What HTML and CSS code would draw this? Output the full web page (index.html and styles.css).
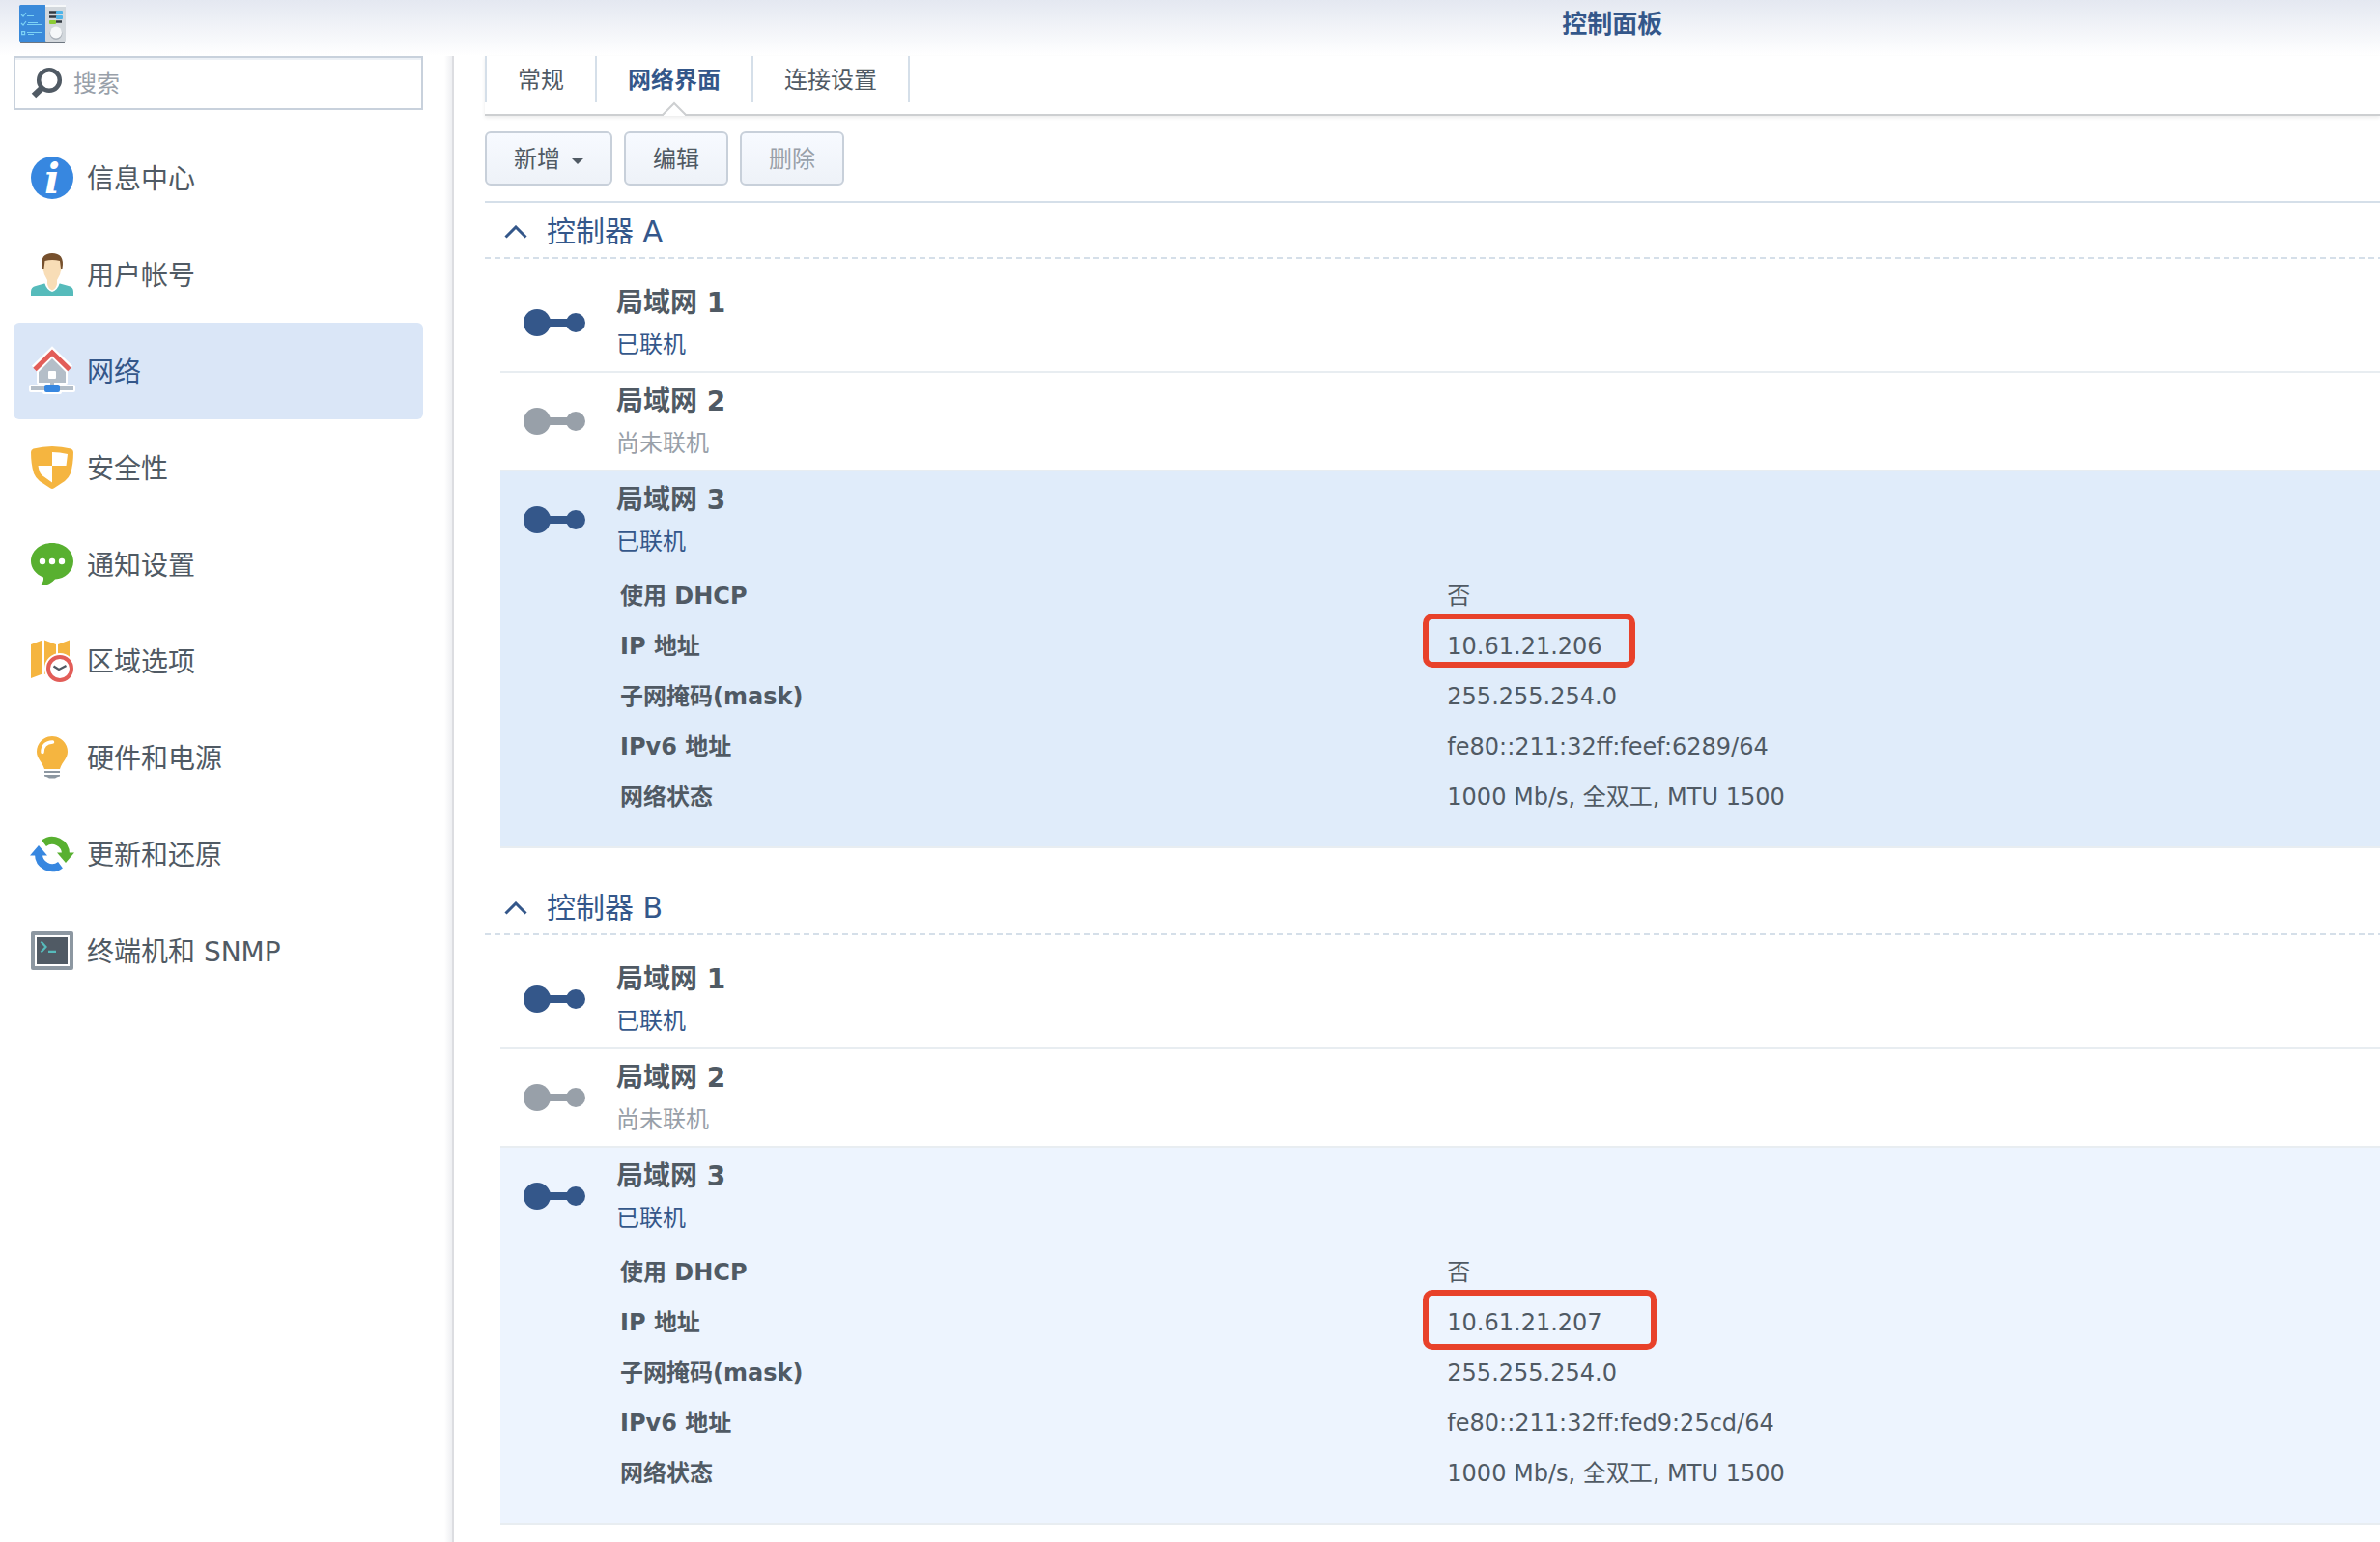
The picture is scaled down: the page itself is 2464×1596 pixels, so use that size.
FILE: index.html
```html
<!DOCTYPE html>
<html lang="zh-CN">
<head>
  <meta charset="UTF-8" />
  <meta name="viewport" content="width=device-width, initial-scale=1.0"/>
  <title>控制面板</title>
  <link rel="stylesheet" href="styles.css">
</head>
<body>
  <svg class="sprite" aria-hidden="true">
    <symbol id="link" viewBox="0 0 64 28">
      <circle cx="14" cy="14" r="14"/>
      <rect x="24" y="10" width="24" height="8"/>
      <circle cx="54" cy="14" r="10"/>
    </symbol>
    <symbol id="chevron" viewBox="0 0 24 14">
      <path d="M1.5 12.5 12 2l10.500 10.500" fill="none" stroke="currentColor" stroke-width="3"/>
    </symbol>
  </svg>

  <header class="titlebar">
    <svg class="logo" viewBox="0 0 48 40">
      <rect x="1" y="37" width="46" height="2.500" rx="1" fill="#6d7680"/>
      <rect width="28" height="38" rx="1.500" fill="#3a8ada"/>
      <rect x="27" width="21" height="38" rx="1" fill="#d3d8dd"/>
      <rect x="27" width="21" height="2" fill="#f6f8fa"/>
      <g fill="none" stroke="#7cd2f5" stroke-width="1.200">
        <path d="M2 10l2 2 3-4M2 19l2 2 3-4M2.600 27.600h3v3h-3zM9 9.500h14M8 11.500h7M9 18.500h10M8 20.500h15M8 28.500h15M9 30.500h6"/>
      </g>
      <path d="M31 7.500h8M31 12.500h8M38 17.500h6" stroke="#333a42" stroke-width="2.500"/>
      <rect x="38" y="6" width="7" height="4" rx="1" fill="#4fb4e8"/>
      <rect x="38" y="11" width="7" height="4" rx="1" fill="#4fb4e8"/>
      <rect x="31" y="16" width="7" height="4" rx="1" fill="#8bcb35"/>
      <circle cx="38" cy="29.500" r="6.500" fill="#aab1b9"/>
      <circle cx="38" cy="28.500" r="6" fill="#f5f7f9"/>
    </svg>
    <h1>控制面板</h1>
  </header>

  <div class="window">
    <aside class="sidebar">
      <label class="search">
        <svg viewBox="0 0 32 32">
          <circle cx="19" cy="13" r="10.800" fill="none" stroke="#505a64" stroke-width="4.500"/>
          <path d="M11 21.500 3 29" stroke="#505a64" stroke-width="6.500"/>
        </svg>
        <input type="text" placeholder="搜索" aria-label="搜索">
      </label>

      <nav class="menu">
        <a href="#info">
          <svg viewBox="0 0 44 44">
            <circle cx="22" cy="22" r="22" fill="#3787e0"/>
            <text x="22" y="38" class="info-mark">i</text>
          </svg>
          <span>信息中心</span>
        </a>
        <a href="#user">
          <svg viewBox="0 0 44 44">
            <path d="M0 44v-4q0-5 5-6l9-2.500h16l9 2.500q5 1 5 6v4z" fill="#56bbbb"/>
            <path d="M14 30q2 8 8 10 6-2 8-10z" fill="#fff"/>
            <path d="M13 7h18l.500 9q-.500 6-4.500 12v4q-1 5-5 6.500-4-1.500-5-6.500v-4q-4-6-4.500-12z" fill="#f8ddb6"/>
            <path d="M12 16Q10 8 13 3.500 16 0 22 0t9 3.500Q34 8 32.500 16h-1.500l-1-8q-8-2-15.500 0l-1 8z" fill="#76502d"/>
          </svg>
          <span>用户帐号</span>
        </a>
        <a href="#network" class="active">
          <svg viewBox="0 0 44 44">
            <g fill="#fff" stroke="#fff" stroke-width="4" stroke-linejoin="round">
              <path d="M22 9 36 23v11H8V23z"/>
              <path d="M0 38h44v4H0zM14 36h16v8H14z"/>
              <path d="M4 20 22 2.500 40 20" fill="none" stroke-width="9" stroke-linejoin="miter"/>
            </g>
            <path d="M22 9 36 23v11H8V23z" fill="#b4bec8"/>
            <rect x="18" y="22" width="8" height="8" rx="1" fill="#fff"/>
            <path d="M0 38h44v4H0zM20 34h4v3h-4z" fill="#b4bec8"/>
            <rect x="14" y="36" width="16" height="8" rx="2" fill="#3787e0"/>
            <path d="M4 20.500 22 3 40 20.500" fill="none" stroke="#e25d58" stroke-width="5"/>
          </svg>
          <span>网络</span>
        </a>
        <a href="#security">
          <svg viewBox="0 0 44 44">
            <path d="M0 6q0-2.500 2.500-3.500Q22-2.500 41.500 2.500 44 3.500 44 6q0 12-3 22-1.500 4-6 8L24 43.300q-2 1.300-4 0L9 36q-4.500-4-6-8Q0 18 0 6z" fill="#f5b540"/>
            <path d="M22 6q8 0 16 2l-1.500 12H22zM7.500 20H22v17.500L11.500 30Q8.500 27.500 7.500 20z" fill="#fff"/>
          </svg>
          <span>安全性</span>
        </a>
        <a href="#notify">
          <svg viewBox="0 0 44 44">
            <path d="M22 0c12.500 0 22 8.500 22 19s-9 18-19 18.500q-6 7-15 6.200 3.500-3.500 3-8.200C5 32.500 0 26 0 19 0 8.500 9.500 0 22 0z" fill="#58b030"/>
            <g fill="#fff">
              <circle cx="12" cy="19" r="3.200"/>
              <circle cx="22" cy="19" r="3.200"/>
              <circle cx="32" cy="19" r="3.200"/>
            </g>
          </svg>
          <span>通知设置</span>
        </a>
        <a href="#region">
          <svg viewBox="0 0 44 44">
            <path d="M0 5 12 .500v35L0 40zM14 .500 26 5v35l-12-4.500zM28 5 40 .500V36l-12 4z" fill="#f5b540"/>
            <circle cx="30" cy="30" r="16" fill="#fff"/>
            <circle cx="30" cy="30" r="12" fill="#fff" stroke="#e25d58" stroke-width="4"/>
            <path d="M23.500 27.500 29 31l7.500-4" fill="none" stroke="#505a64" stroke-width="2.200"/>
          </svg>
          <span>区域选项</span>
        </a>
        <a href="#hardware">
          <svg viewBox="0 0 44 44">
            <path d="M22 0a16 16 0 0 1 16 16c0 7-5.500 10-8 18H14C11.500 26 6 23 6 16A16 16 0 0 1 22 0z" fill="#f5b540"/>
            <path d="M12 16.500Q12 6.500 22.500 6" fill="none" stroke="#fff" stroke-width="3.500" stroke-linecap="round"/>
            <path d="M14 36h16v2H14zM14 40h16v1.500Q27 42 25 43.500h-6Q17 42 14 41.500z" fill="#8c97a1"/>
          </svg>
          <span>硬件和电源</span>
        </a>
        <a href="#update">
          <svg viewBox="0 0 44 44">
            <path d="M13.500 10.800A14 14 0 0 1 36 22" fill="none" stroke="#58b030" stroke-width="8"/>
            <path d="M27 20.500h18l-9 10.500z" fill="#58b030"/>
            <path d="M30.500 33.200A14 14 0 0 1 8 22" fill="none" stroke="#3787e0" stroke-width="8"/>
            <path d="M-1 23.500h18L8 13z" fill="#3787e0"/>
          </svg>
          <span>更新和还原</span>
        </a>
        <a href="#terminal">
          <svg viewBox="0 0 44 44">
            <rect y="2" width="44" height="40" rx="2" fill="#8c97a1"/>
            <rect x="4" y="6" width="36" height="32" fill="#fff"/>
            <rect x="6" y="8" width="32" height="28" fill="#505a64"/>
            <path d="M10.500 12.500 15.500 18l-5 5.500M18 22.800h8" fill="none" stroke="#56bbbb" stroke-width="2.200"/>
          </svg>
          <span>终端机和 SNMP</span>
        </a>
      </nav>
    </aside>

    <main class="content">
      <nav class="tabs">
        <a href="#general">常规</a>
        <a href="#interface" class="active">
          网络界面
          <svg class="pointer" viewBox="0 0 26 14">
            <path d="M1 14 13 2l12 12z" fill="#fff"/>
            <path d="M0 13h1L13 1l12 12h1" fill="none" stroke="#cdcfd1" stroke-width="2"/>
          </svg>
        </a>
        <a href="#connectivity">连接设置</a>
      </nav>

      <div class="toolbar">
        <button type="button">新增 <span class="caret"></span></button>
        <button type="button">编辑</button>
        <button type="button" disabled>删除</button>
      </div>

      <section class="group">
        <button type="button" class="group-title" aria-expanded="true">
          <svg class="chevron"><use href="#chevron"/></svg>
          控制器 A
        </button>
        <ul class="lans">
          <li>
            <div class="lan">
              <svg class="link"><use href="#link"/></svg>
              <div class="lan-name">
                <h3>局域网 1</h3>
                <p>已联机</p>
              </div>
            </div>
          </li>
          <li class="offline">
            <div class="lan">
              <svg class="link"><use href="#link"/></svg>
              <div class="lan-name">
                <h3>局域网 2</h3>
                <p>尚未联机</p>
              </div>
            </div>
          </li>
          <li class="open hovered">
            <div class="lan">
              <svg class="link"><use href="#link"/></svg>
              <div class="lan-name">
                <h3>局域网 3</h3>
                <p>已联机</p>
              </div>
            </div>
            <table class="details">
              <tr><th scope="row">使用 DHCP</th><td>否</td></tr>
              <tr><th scope="row">IP 地址</th><td>10.61.21.206<span class="mark"></span></td></tr>
              <tr><th scope="row">子网掩码(mask)</th><td>255.255.254.0</td></tr>
              <tr><th scope="row">IPv6 地址</th><td>fe80::211:32ff:feef:6289/64</td></tr>
              <tr><th scope="row">网络状态</th><td>1000 Mb/s, 全双工, MTU 1500</td></tr>
            </table>
          </li>
        </ul>
      </section>

      <section class="group">
        <button type="button" class="group-title" aria-expanded="true">
          <svg class="chevron"><use href="#chevron"/></svg>
          控制器 B
        </button>
        <ul class="lans">
          <li>
            <div class="lan">
              <svg class="link"><use href="#link"/></svg>
              <div class="lan-name">
                <h3>局域网 1</h3>
                <p>已联机</p>
              </div>
            </div>
          </li>
          <li class="offline">
            <div class="lan">
              <svg class="link"><use href="#link"/></svg>
              <div class="lan-name">
                <h3>局域网 2</h3>
                <p>尚未联机</p>
              </div>
            </div>
          </li>
          <li class="open">
            <div class="lan">
              <svg class="link"><use href="#link"/></svg>
              <div class="lan-name">
                <h3>局域网 3</h3>
                <p>已联机</p>
              </div>
            </div>
            <table class="details">
              <tr><th scope="row">使用 DHCP</th><td>否</td></tr>
              <tr><th scope="row">IP 地址</th><td>10.61.21.207<span class="mark wide"></span></td></tr>
              <tr><th scope="row">子网掩码(mask)</th><td>255.255.254.0</td></tr>
              <tr><th scope="row">IPv6 地址</th><td>fe80::211:32ff:fed9:25cd/64</td></tr>
              <tr><th scope="row">网络状态</th><td>1000 Mb/s, 全双工, MTU 1500</td></tr>
            </table>
          </li>
        </ul>
      </section>
    </main>
  </div>
</body>
</html>
```

FILE: styles.css
```css
* {
  box-sizing: border-box;
}
body {
  margin: 0;
  min-height: 100vh;
  display: flex;
  flex-direction: column;
  background: #fff;
  color: #505a64;
  font-family: Verdana, 'DejaVu Sans', 'Noto Sans CJK SC', sans-serif;
  font-size: 24px;
  line-height: 32px;
}
a {
  color: inherit;
  text-decoration: none;
}
h1, h3, p, ul {
  margin: 0;
  padding: 0;
}
svg {
  flex: none;
  overflow: visible;
}
.sprite {
  position: absolute;
  width: 0;
  height: 0;
}

/* Title bar */
.titlebar {
  display: flex;
  align-items: center;
  height: 58px;
  padding: 0 0 8px 20px;
  background: linear-gradient(#e4e8f1, #fff);
}
.logo {
  width: 48px;
  height: 40px;
}
.titlebar h1 {
  flex: 1;
  padding-left: 33%;
  text-align: center;
  font-size: 26px;
  line-height: 32px;
  color: #34578a;
}

/* Sidebar */
.window {
  flex: 1;
  display: flex;
}
.sidebar {
  flex: none;
  width: 470px;
  padding: 0 30px 0 14px;
  border-right: 2px solid #dcdde1;
  background: linear-gradient(to left, #eeeff2, #fff 8px);
}
.search {
  display: flex;
  align-items: center;
  gap: 12px;
  height: 56px;
  padding: 0 16px;
  border: 2px solid #c8d1dc;
  background: #fff;
  box-shadow: inset 0 2px #edf1f6;
}
.search svg {
  width: 32px;
  height: 32px;
}
.search input {
  flex: 1;
  min-width: 0;
  padding: 2px 0 0;
  border: none;
  outline: none;
  background: none;
  color: inherit;
  font: inherit;
}
.search input::placeholder {
  color: #98a0a9;
  opacity: 1;
}
.menu {
  padding-top: 20px;
}
.menu a {
  display: flex;
  align-items: center;
  gap: 14px;
  height: 100px;
  padding: 0 18px;
  border-radius: 6px;
  font-size: 28px;
}
.menu a.active {
  background: #dae6f7;
  color: #34578a;
}
.menu svg {
  width: 44px;
  height: 44px;
}
.menu span {
  padding-top: 4px;
}
.info-mark {
  font: italic bold 42px 'DejaVu Serif', serif;
  text-anchor: middle;
  fill: #fff;
}

/* Tabs */
.content {
  flex: 1;
  min-width: 0;
  padding-left: 32px;
}
.tabs {
  display: flex;
  padding-bottom: 12px;
  border-bottom: 2px solid #cdcfd1;
  box-shadow: 0 2px 4px rgba(0, 0, 0, 0.08);
}
.tabs a {
  position: relative;
  padding: 9px 32px 7px;
  border-left: 2px solid #d5dfe9;
}
.tabs a:last-child {
  border-right: 2px solid #d5dfe9;
}
.tabs a.active {
  color: #34578a;
  font-weight: bold;
}
.pointer {
  position: absolute;
  left: calc(50% - 13px);
  bottom: -14px;
  width: 26px;
  height: 14px;
}

/* Toolbar */
.toolbar {
  display: flex;
  gap: 12px;
  padding: 16px 0;
  border-bottom: 2px solid #d5dfe9;
}
.toolbar button {
  display: flex;
  align-items: center;
  gap: 12px;
  height: 56px;
  padding: 2px 28px 0;
  border: 2px solid #c8d0da;
  border-radius: 6px;
  background: linear-gradient(#f7faff, #eef2f8);
  color: inherit;
  font: inherit;
}
.toolbar button:disabled {
  color: #98a0a9;
}
.caret {
  margin-top: 4px;
  border: 6px solid transparent;
  border-top-color: #505a64;
  border-bottom: none;
}

/* Controller groups */
.group {
  margin-bottom: 32px;
}
.group:last-child {
  margin-bottom: 0;
}
.group-title {
  display: flex;
  align-items: center;
  gap: 20px;
  width: 100%;
  height: 58px;
  padding: 1px 20px 0;
  border: none;
  background: repeating-linear-gradient(to right, #d5dfe9 0 6px, transparent 6px 10px) left bottom / 100% 2px no-repeat;
  color: #34578a;
  font: inherit;
  font-size: 30px;
}
.chevron {
  width: 24px;
  height: 14px;
}
.lans {
  padding: 16px 0 0 16px;
  list-style: none;
}
.lans li {
  border-bottom: 2px solid #e8edf1;
}
.lans li.open {
  background: #edf4fe;
}
.lans li.hovered {
  background: #e0ecfa;
}
.lan {
  display: flex;
  align-items: center;
  gap: 32px;
  height: 100px;
  padding-left: 24px;
}
.lan-name {
  padding-top: 2px;
}
.lan h3 {
  font-size: 28px;
  line-height: 44px;
}
.lan p {
  line-height: 42px;
  color: #34578a;
}
.link {
  width: 64px;
  height: 28px;
  fill: #34578a;
}
.offline .link {
  fill: #98a0a9;
}
.offline p {
  color: #98a0a9;
}
.details {
  width: 100%;
  padding: 3px 0 25px 124px;
  border-spacing: 0;
  table-layout: fixed;
}
.details th,
.details td {
  height: 52px;
  padding: 0;
  text-align: left;
}
.details th {
  width: 47%;
}
.details td {
  position: relative;
}

/* Red frame round the address */
.mark {
  position: absolute;
  left: -25px;
  top: -8px;
  width: 220px;
  height: 56px;
  border: 6px solid #e8412a;
  border-radius: 10px;
}
.mark.wide {
  width: 242px;
  height: 62px;
}
```
